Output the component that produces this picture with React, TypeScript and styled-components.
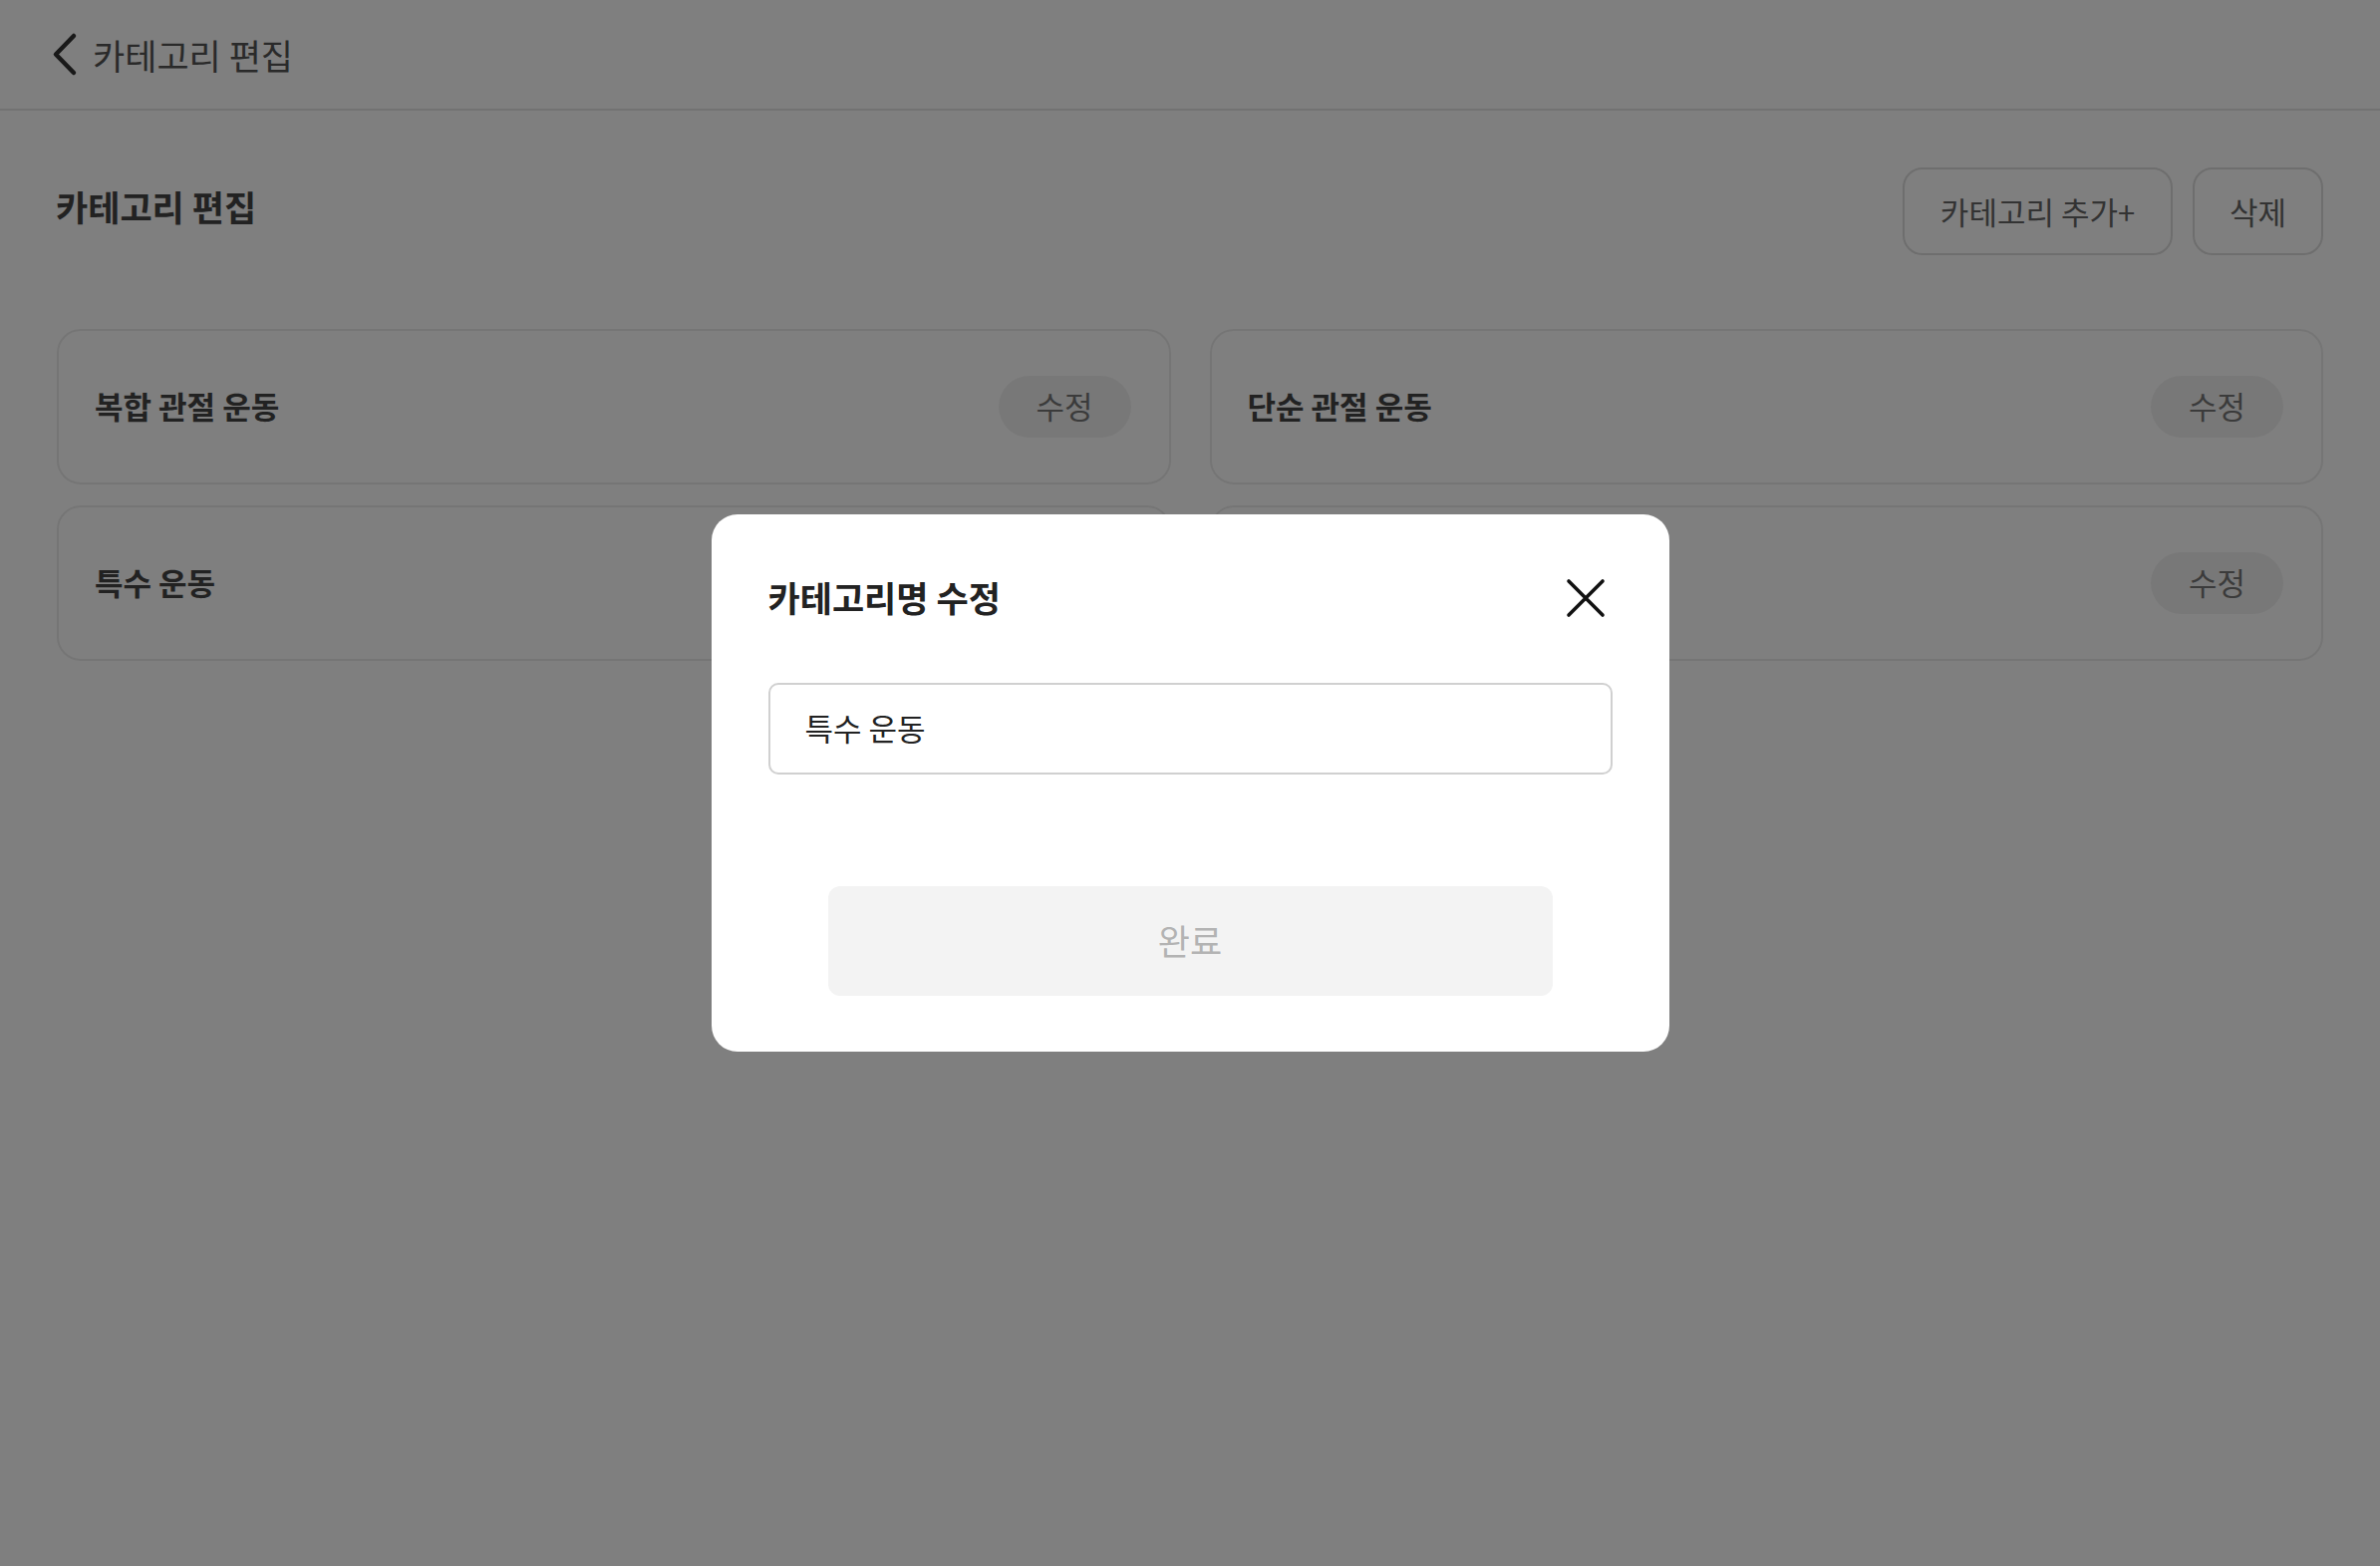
import { styled, createGlobalStyle } from 'styled-components';

const categories = ['복합 관절 운동', '단순 관절 운동', '특수 운동', '기타 운동'];

const GlobalStyle = createGlobalStyle`
  html, body {
    margin: 0;
    padding: 0;
    background: #ffffff;
    font-family: "Noto Sans CJK KR", "Noto Sans", sans-serif;
  }
  * {
    box-sizing: border-box;
  }
`;

const BackIcon = () => (
  <svg width="28" height="45" viewBox="0 0 28 45" fill="none">
    <path d="M24 4 L6 22.5 L24 41" stroke="#333" strokeWidth="4.5" strokeLinecap="round" strokeLinejoin="round" />
  </svg>
);

const CloseIcon = () => (
  <svg width="40" height="40" viewBox="0 0 40 40" fill="none">
    <path d="M3 3 L37 37 M37 3 L3 37" stroke="#111" strokeWidth="3.6" strokeLinecap="round" />
  </svg>
);

export default function App() {
  return <Page>
    <GlobalStyle />
    <Header>
      <BackButton><BackIcon /></BackButton>
      <HeaderTitle>카테고리 편집</HeaderTitle>
    </Header>
    <Main>
      <Toolbar>
        <Heading>카테고리 편집</Heading>
        <Actions>
          <OutlineButton $width={271}>카테고리 추가+</OutlineButton>
          <OutlineButton $width={131}>삭제</OutlineButton>
        </Actions>
      </Toolbar>
      <Grid>
        {categories.map((name) => (
          <Card key={name}>
            <CardTitle>{name}</CardTitle>
            <EditPill>수정</EditPill>
          </Card>
        ))}
      </Grid>
    </Main>

    <Overlay>
      <Modal>
        <ModalHeader>
          <ModalTitle>카테고리명 수정</ModalTitle>
          <CloseButton><CloseIcon /></CloseButton>
        </ModalHeader>
        <NameInput defaultValue="특수 운동" />
        <DoneButton disabled>완료</DoneButton>
      </Modal>
    </Overlay>
  </Page>
}

const Page = styled.div`
  position: relative;
  width: 100%;
  min-height: 100vh;
  background: #ffffff;
`

const Header = styled.header`
  display: flex;
  align-items: center;
  gap: 13px;
  height: 111px;
  padding: 0 0 0 50px;
  border-bottom: 2px solid #e4e4e4;
`

const BackButton = styled.div`
  display: flex;
  align-items: center;
  width: 30px;
  height: 45px;
`

const HeaderTitle = styled.h1`
  margin: 0;
  font-weight: 400;
  font-size: 35px;
  line-height: 1;
  color: #555;
`

const Main = styled.main`
  display: flex;
  flex-direction: column;
  gap: 74px;
  padding: 57px 57px 0;
`

const Toolbar = styled.div`
  display: flex;
  align-items: center;
  justify-content: space-between;
`

const Heading = styled.h2`
  margin: 0 0 0 -1px;
  font-weight: 700;
  font-size: 35px;
  line-height: 1;
  color: #444;
  transform: translateY(-6px);
`

const Actions = styled.div`
  display: flex;
  gap: 20px;
`

const OutlineButton = styled.button<{ $width: number }>`
  width: ${(p) => p.$width}px;
  height: 88px;
  padding: 0 0 2px;
  border: 2px solid #dcdcdc;
  border-radius: 20px;
  background: #ffffff;
  font-family: inherit;
  font-size: 31px;
  color: #666;
`

const Grid = styled.div`
  display: grid;
  grid-template-columns: 1fr 1fr;
  column-gap: 39px;
  row-gap: 21px;
`

const Card = styled.div`
  display: flex;
  align-items: center;
  justify-content: space-between;
  height: 156px;
  padding: 0 38px 0 36px;
  border: 2px solid #ebebeb;
  border-radius: 24px;
`

const CardTitle = styled.div`
  padding-bottom: 4px;
  font-weight: 700;
  font-size: 31px;
  color: #444;
`

const EditPill = styled.div`
  display: flex;
  align-items: center;
  justify-content: center;
  width: 133px;
  height: 62px;
  padding-bottom: 3px;
  border-radius: 31px;
  background: #f1f1f1;
  font-size: 31px;
  color: #777;
`

const Overlay = styled.div`
  position: fixed;
  inset: 0;
  display: flex;
  align-items: center;
  justify-content: center;
  background: rgba(0, 0, 0, 0.5);
`

const Modal = styled.div`
  display: flex;
  flex-direction: column;
  width: 961px;
  height: 539px;
  padding: 56px 57px 56px 57px;
  border-radius: 26px;
  background: #ffffff;
`

const ModalHeader = styled.div`
  display: flex;
  align-items: center;
  justify-content: space-between;
  height: 56px;
`

const ModalTitle = styled.h3`
  margin: 0 0 3px;
  font-weight: 700;
  font-size: 35px;
  line-height: 1;
  color: #222;
`

const CloseButton = styled.div`
  display: flex;
  margin-right: 7px;
`

const NameInput = styled.input`
  margin-top: 57px;
  height: 92px;
  padding: 0 35px 3px;
  border: 2px solid #d0d0d0;
  border-radius: 10px;
  outline: none;
  font-family: inherit;
  font-size: 31px;
  color: #222;
`

const DoneButton = styled.button`
  align-self: center;
  margin-top: 112px;
  width: 727px;
  height: 110px;
  padding: 0 0 4px;
  border: none;
  border-radius: 12px;
  background: #f3f3f3;
  font-family: inherit;
  font-size: 35px;
  color: #b3b3b3;
`
